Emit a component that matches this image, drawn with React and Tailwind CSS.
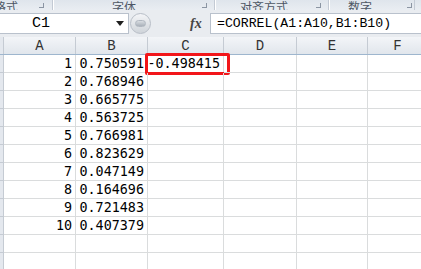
const cols = [
  { key: 'A', w: 'w-[72px]' },
  { key: 'B', w: 'w-[72px]' },
  { key: 'C', w: 'w-[76px]' },
  { key: 'D', w: 'w-[73px]' },
  { key: 'E', w: 'w-[71px]' },
  { key: 'F', w: 'w-[60px]' },
];

const values = [
  '0.750591',
  '0.768946',
  '0.665775',
  '0.563725',
  '0.766981',
  '0.823629',
  '0.047149',
  '0.164696',
  '0.721483',
  '0.407379',
];

const mono = "[font-family:'DejaVu_Sans_Mono',monospace]";
const serifMono = "[font-family:'Liberation_Mono',monospace]";

const RibbonLabels = () => (
  <div className="relative flex h-[10px] overflow-hidden bg-gradient-to-b from-[#dfe5ec] to-[#e9edf2] text-[12px] leading-[12px] text-[#4d5664] [font-family:'Noto_Sans_CJK_SC',sans-serif]">
    <div className="flex w-[53px] shrink-0 items-end border-r border-[#c3cad4]">
      <span className="-mb-[3px] -ml-[6px]">格式</span>
      <span className="mb-[2px] ml-auto mr-[8px] h-[5px] w-[5px] border-b border-r border-[#8b95a3]"></span>
    </div>
    <div className="flex w-[162px] shrink-0 items-end border-l border-white border-r border-r-[#c3cad4]">
      <span className="-mb-[3px] ml-[58px]">字体</span>
      <span className="mb-[2px] ml-auto mr-[7px] h-[5px] w-[5px] border-b border-r border-[#8b95a3]"></span>
    </div>
    <div className="flex w-[114px] shrink-0 items-end border-l border-white border-r border-r-[#c3cad4]">
      <span className="-mb-[3px] ml-[24px]">对齐方式</span>
      <span className="mb-[2px] ml-auto mr-[7px] h-[5px] w-[5px] border-b border-r border-[#8b95a3]"></span>
    </div>
    <div className="flex w-[86px] shrink-0 items-end border-l border-white border-r border-r-[#c3cad4]">
      <span className="-mb-[3px] ml-[18px]">数字</span>
      <span className="mb-[2px] ml-auto mr-[2px] h-[5px] w-[5px] border-b border-r border-[#8b95a3]"></span>
    </div>
  </div>
);

const FormulaBar = () => (
  <div className="flex h-[27px] items-center bg-[#e9ecf0] pt-[3px] pb-[3px]">
    <div className="flex h-[21px] w-[129px] shrink-0 items-center border border-l-0 border-[#b9c1cc] bg-white">
      <span className={`${serifMono} ml-[32px] text-[15px] leading-none text-black`}>C1</span>
      <span className="ml-auto mr-[4px] h-0 w-0 border-l-[4px] border-r-[4px] border-t-[5px] border-l-transparent border-r-transparent border-t-[#1f1f1f]"></span>
    </div>
    <div className="ml-[1px] flex h-[21px] w-[21px] shrink-0 items-center justify-center rounded-full border border-[#b8bec7] bg-gradient-to-b from-[#f4f5f7] to-[#cfd4da]">
      <span className="h-[7px] w-[11px] rounded-full bg-gradient-to-b from-[#d9dde2] to-[#aab1ba] border border-[#b0b7c0]"></span>
    </div>
    <div className="flex flex-1 items-center">
      <span className="ml-[39px] [font-family:'Liberation_Serif',serif] text-[14px] font-bold italic leading-none text-[#444]">fx</span>
    </div>
    <div className="flex h-[21px] w-[211px] shrink-0 items-center border border-r-0 border-[#b9c1cc] bg-white">
      <span className={`${serifMono} ml-[6px] text-[13.2px] leading-none text-black`}>=CORREL(A1:A10,B1:B10)</span>
    </div>
  </div>
);

const HeaderRow = () => (
  <div className="flex h-[18px] border-b border-[#9eb6ce]">
    <div className="w-[4px] shrink-0 border-r border-[#c5cbd3] bg-[#e4e8ee]"></div>
    {cols.map((c) => (
      <div
        key={c.key}
        className={`${c.w} shrink-0 flex items-center justify-center border-r border-[#c5cbd3] bg-gradient-to-b from-[#f3f5f8] to-[#e1e6ec] ${serifMono} text-[14px] leading-none text-[#333]`}
      >
        {c.key}
      </div>
    ))}
  </div>
);

const Row = ({ n, value }) => (
  <div className="flex h-[18px]">
    <div className="w-[4px] shrink-0 border-b border-r border-[#c5cbd3] bg-[#e4e8ee]"></div>
    {cols.map((c, i) => {
      let text = '';
      if (i === 0 && n) text = String(n);
      if (i === 1 && value) text = value;
      if (i === 2 && n === 1) text = '-0.498415';
      return (
        <div
          key={c.key}
          className={`${c.w} relative shrink-0 flex items-center justify-end border-b border-r border-[#dadcdd] pr-[3px] ${mono} text-[13.4px] leading-none text-black`}
        >
          {text}
          {i === 2 && n === 1 && (
            <div className="absolute -left-[3px] -right-[7px] -top-[2px] -bottom-[3px] rounded-[2px] border-[3px] border-[#f2161a]"></div>
          )}
        </div>
      );
    })}
  </div>
);

export default function App() {
  return (
    <div className="h-[269px] w-[421px] overflow-hidden bg-white">
      <RibbonLabels />
      <FormulaBar />
      <HeaderRow />
      {values.map((v, i) => (
        <Row key={i} n={i + 1} value={v} />
      ))}
      <Row />
      <Row />
    </div>
  );
}
